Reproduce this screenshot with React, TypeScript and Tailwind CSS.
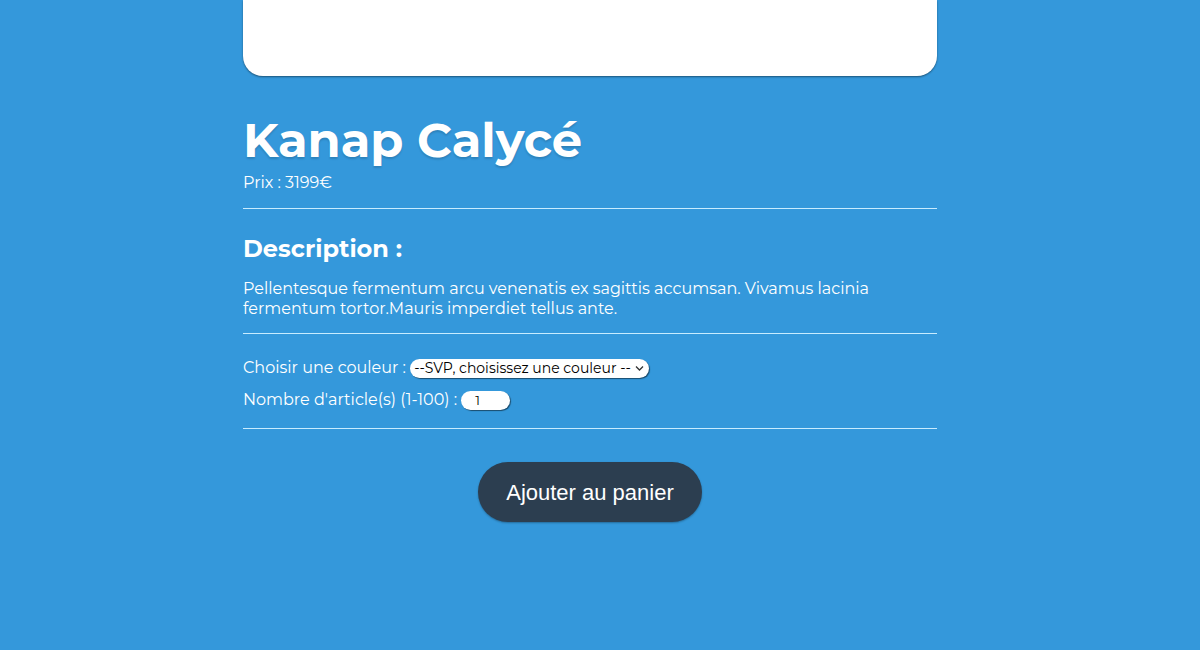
export default function App() {
  return (
    <div
      className="min-h-[650px] w-full bg-[#3498db] overflow-hidden"
      style={{ fontFamily: '"Montserrat", "DejaVu Sans", "Open Sans", sans-serif' }}
    >
      <div className="flex justify-center pr-[20px]">
        <article className="w-[694px] flex flex-col">
          {/* Image card (top scrolled out of view) */}
          <div className="h-[76px] bg-white rounded-b-[20px] shadow-[0_1px_2px_rgba(0,0,0,0.45)]" />

          <h1 className="mt-[36px] text-[48px] leading-[56px] font-bold text-white [text-shadow:0_2px_2px_rgba(0,0,0,0.15)]">
            Kanap Calycé
          </h1>
          <p className="mt-[5px] text-[16px] leading-[20px] text-white">Prix : 3199€</p>

          <hr className="mt-[15px] border-0 border-t border-[#c8ecff]" />

          <h2 className="mt-[25px] text-[24px] leading-[30px] font-bold text-white">Description :</h2>
          <p className="mt-[15px] text-[16px] leading-[20px] text-white">
            Pellentesque fermentum arcu venenatis ex sagittis accumsan. Vivamus lacinia fermentum tortor.Mauris imperdiet tellus ante.
          </p>

          <hr className="mt-[14px] border-0 border-t border-[#c8ecff]" />

          <div className="mt-[24px] flex items-center text-[16px] leading-[20px] text-white">
            <label htmlFor="color-select">Choisir une couleur :&nbsp;</label>
            <div className="relative h-[19px] w-[239px] bg-white rounded-full text-black shadow-[1px_1px_1px_rgba(0,0,0,0.5)] flex items-center pl-[4px]">
              <span className="text-[14px] leading-none whitespace-nowrap">--SVP, choisissez une couleur --</span>
              <svg className="absolute right-[5px] top-[6px]" width="9" height="7" viewBox="0 0 9 7" fill="none">
                <path d="M1 1.5 L4.5 5 L8 1.5" stroke="#333" strokeWidth="1.3" />
              </svg>
            </div>
          </div>

          <div className="mt-[12px] flex items-center text-[16px] leading-[20px] text-white">
            <label htmlFor="itemQuantity">Nombre d'article(s) (1-100) :&nbsp;</label>
            <div className="h-[19px] w-[49px] bg-white rounded-full text-black shadow-[1px_1px_1px_rgba(0,0,0,0.5)] flex items-center pl-[14px] text-[13px] leading-none">
              1
            </div>
          </div>

          <hr className="mt-[18px] border-0 border-t border-[#c8ecff]" />

          <div className="mt-[33px] flex justify-center">
            <button
              className="w-[224px] h-[60px] rounded-full bg-[#2c3e50] text-white text-[22px] shadow-[0_1px_2px_rgba(0,0,0,0.3)]"
              style={{ fontFamily: '"Liberation Sans", Arial, sans-serif' }}
            >
              Ajouter au panier
            </button>
          </div>
        </article>
      </div>
    </div>
  );
}
